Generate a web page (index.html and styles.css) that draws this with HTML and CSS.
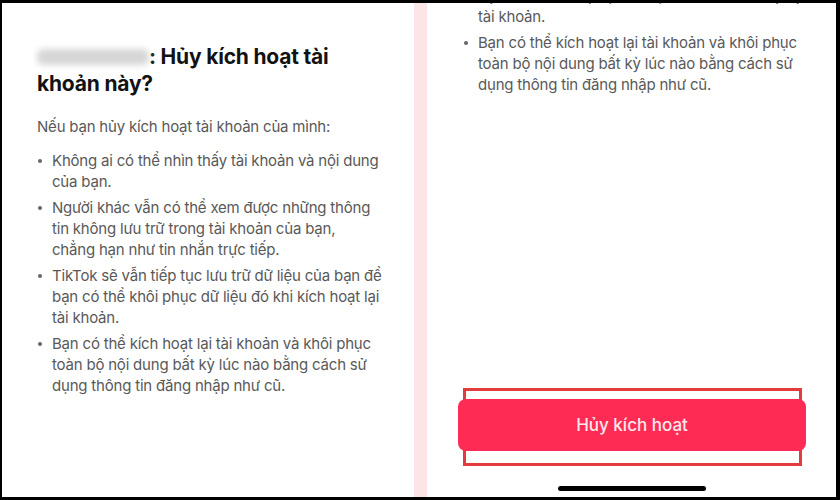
FILE: index.html
```html
<!DOCTYPE html>
<html lang="vi">

<head>
    <meta charset="UTF-8">
    <meta name="viewport" content="width=device-width, initial-scale=1.0">
    <title>Hủy kích hoạt tài khoản</title>
    <link rel="stylesheet" href="styles.css">
</head>

<body>
    <div class="frame">
        <div class="panel panel-left">
            <h1 class="title"><span class="blurred"></span>: Hủy kích hoạt tài khoản này?</h1>
            <p class="intro">Nếu bạn hủy kích hoạt tài khoản của mình:</p>
            <ul class="points">
                <li>Không ai có thể nhìn thấy tài khoản và nội dung<br>của bạn.</li>
                <li>Người khác vẫn có thể xem được những thông<br>tin không lưu trữ trong tài khoản của bạn,<br>chẳng hạn như tin nhắn trực tiếp.</li>
                <li>TikTok sẽ vẫn tiếp tục lưu trữ dữ liệu của bạn để<br>bạn có thể khôi phục dữ liệu đó khi kích hoạt lại<br>tài khoản.</li>
                <li>Bạn có thể kích hoạt lại tài khoản và khôi phục<br>toàn bộ nội dung bất kỳ lúc nào bằng cách sử<br>dụng thông tin đăng nhập như cũ.</li>
            </ul>
        </div>

        <div class="divider"></div>

        <div class="panel panel-right">
            <ul class="points scrolled">
                <li>TikTok sẽ vẫn tiếp tục lưu trữ dữ liệu của bạn để<br>bạn có thể khôi phục dữ liệu đó khi kích hoạt lại<br>tài khoản.</li>
                <li>Bạn có thể kích hoạt lại tài khoản và khôi phục<br>toàn bộ nội dung bất kỳ lúc nào bằng cách sử<br>dụng thông tin đăng nhập như cũ.</li>
            </ul>
            <div class="highlight">
                <button class="deactivate-button">Hủy kích hoạt</button>
            </div>
            <div class="home-bar"></div>
        </div>
    </div>
</body>

</html>
```

FILE: styles.css
```css
* {
    box-sizing: border-box;
}

body {
    margin: 0;
    background: #000;
    font-family: Inter, "Noto Sans", sans-serif;
}

.frame {
    display: flex;
    width: 840px;
    height: 500px;
    padding: 3px 4px 3px 2px;
}

.panel {
    background: #fff;
    overflow: hidden;
}

.panel-left {
    width: 412px;
    padding: 40px 40px 0 35px;
}

.divider {
    width: 13px;
    background: #fbe5e7;
}

.panel-right {
    width: 409px;
    display: flex;
    flex-direction: column;
    padding: 0 0 6px 36px;
}

.title {
    margin: 0;
    font-size: 21px;
    line-height: 27px;
    font-weight: 700;
    color: #121212;
    letter-spacing: -0.2px;
}

.blurred {
    display: inline-block;
    width: 112px;
    height: 16px;
    vertical-align: -1px;
    background: #d6d6d6;
    border-radius: 6px;
    filter: blur(3px);
}

.intro {
    margin: 19px 0 0;
    font-size: 15px;
    line-height: 21px;
    letter-spacing: -0.2px;
    color: #595959;
}

.points {
    list-style: none;
    margin: 13px 0 0;
    padding: 0;
    white-space: nowrap;
}

.points li {
    position: relative;
    padding-left: 15px;
    margin-bottom: 5px;
    font-size: 15px;
    line-height: 21px;
    letter-spacing: -0.2px;
    color: #595959;
}

.points li::before {
    content: "";
    position: absolute;
    left: 1px;
    top: 9px;
    width: 4px;
    height: 4px;
    border-radius: 50%;
    background: #666;
}

.scrolled {
    margin-top: -39px;
}

.highlight {
    margin-top: auto;
    width: 339px;
    border: 3px solid #e43b3f;
    padding: 8px 0 12px;
}

.deactivate-button {
    display: block;
    width: calc(100% + 15px);
    margin: 0 -7px 0 -8px;
    height: 52px;
    border: none;
    border-radius: 8px;
    background: #fe2c55;
    color: #fde8ec;
    font-family: inherit;
    font-size: 17px;
    font-weight: 500;
    cursor: pointer;
}

.home-bar {
    width: 148px;
    height: 5px;
    margin: 20px 0 0 95px;
    border-radius: 3px;
    background: #000;
}
```
